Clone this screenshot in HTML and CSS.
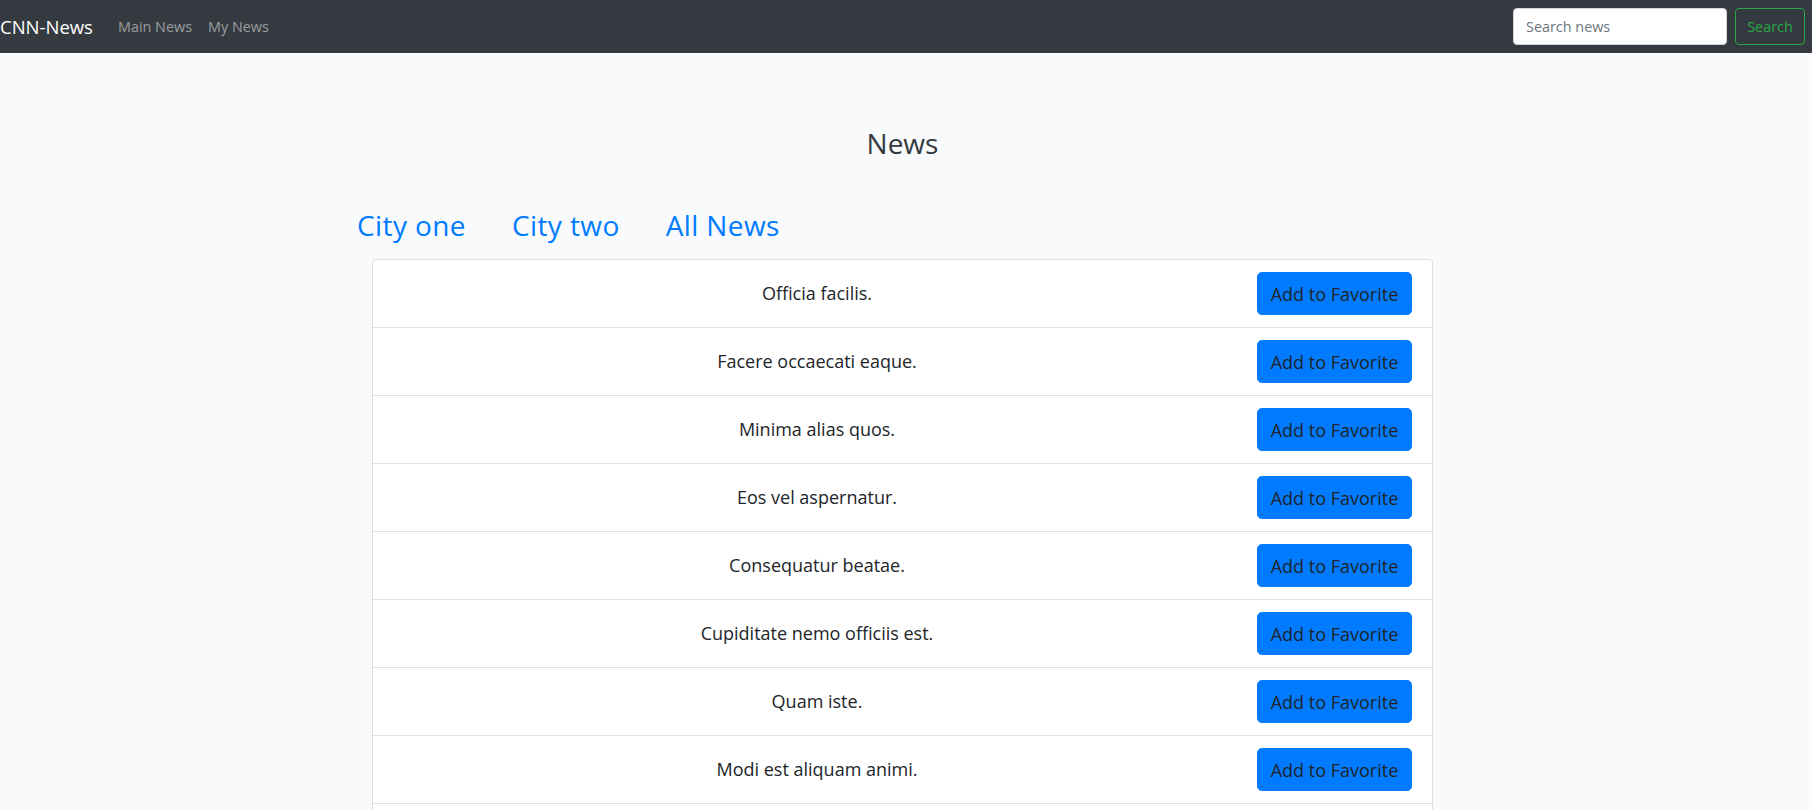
FILE: index.html
```html
<!DOCTYPE html>
<html lang="en">
<head>
<meta charset="utf-8">
<title>CNN-News</title>
<link rel="stylesheet" href="styles.css">
</head>
<body>
<nav class="navbar">
  <a class="brand" href="#">CNN-News</a>
  <ul class="nav-links">
    <li><a href="#">Main News</a></li>
    <li><a href="#">My News</a></li>
  </ul>
  <form class="search-form">
    <input class="search-input" type="search" placeholder="Search news">
    <button class="search-btn" type="button">Search</button>
  </form>
</nav>
<main class="page">
  <h1 class="title">News</h1>
  <div class="tabs">
    <a class="tab" href="#">City one</a>
    <a class="tab" href="#">City two</a>
    <a class="tab" href="#">All News</a>
  </div>
  <ul class="news-list">
    <li class="news-item"><span class="news-title">Officia facilis.</span><button class="fav-btn" type="button">Add to Favorite</button></li>
    <li class="news-item"><span class="news-title">Facere occaecati eaque.</span><button class="fav-btn" type="button">Add to Favorite</button></li>
    <li class="news-item"><span class="news-title">Minima alias quos.</span><button class="fav-btn" type="button">Add to Favorite</button></li>
    <li class="news-item"><span class="news-title">Eos vel aspernatur.</span><button class="fav-btn" type="button">Add to Favorite</button></li>
    <li class="news-item"><span class="news-title">Consequatur beatae.</span><button class="fav-btn" type="button">Add to Favorite</button></li>
    <li class="news-item"><span class="news-title">Cupiditate nemo officiis est.</span><button class="fav-btn" type="button">Add to Favorite</button></li>
    <li class="news-item"><span class="news-title">Quam iste.</span><button class="fav-btn" type="button">Add to Favorite</button></li>
    <li class="news-item"><span class="news-title">Modi est aliquam animi.</span><button class="fav-btn" type="button">Add to Favorite</button></li>
    <li class="news-item"><span class="news-title">Voluptas sint nihil.</span><button class="fav-btn" type="button">Add to Favorite</button></li>
    <li class="news-item"><span class="news-title">Et rerum dolorem.</span><button class="fav-btn" type="button">Add to Favorite</button></li>
  </ul>
</main>
</body>
</html>
```
FILE: styles.css
```css
* { box-sizing: border-box; }
html, body { margin: 0; padding: 0; }
body {
  background: #f8fafc;
  color: #212529;
  font-family: "Open Sans", "Noto Sans", sans-serif;
  font-size: 14.4px;
  line-height: 1.6;
}
a { text-decoration: none; }

.navbar {
  display: flex;
  align-items: center;
  height: 53px;
  padding: 0 7px 0 0;
  background: #343a40;
}
.brand {
  color: #fff;
  font-size: 18.5px;
  line-height: 1.5;
  margin-right: 17px;
}
.nav-links {
  display: flex;
  list-style: none;
  margin: 0;
  padding: 0;
}
.nav-links a {
  display: block;
  padding: 8px 8px;
  color: rgba(255, 255, 255, 0.5);
  font-size: 14.4px;
}
.search-form {
  display: flex;
  align-items: center;
  gap: 8px;
  margin-left: auto;
}
.search-input {
  width: 214px;
  height: 37px;
  padding: 6px 12px;
  border: 1px solid #ced4da;
  border-radius: 4px;
  background: #fff;
  font-family: inherit;
  font-size: 14.4px;
  color: #495057;
  outline: none;
}
.search-input::placeholder { color: #6c757d; }
.search-btn {
  width: 70px;
  height: 37px;
  padding: 6px 0;
  border: 1px solid #28a745;
  border-radius: 4px;
  background: transparent;
  color: #28a745;
  font-family: inherit;
  font-size: 14.4px;
}

.page {
  width: 1101px;
  margin-left: 352px;
  padding-top: 74px;
}
.title {
  margin: 0 0 48px;
  text-align: center;
  font-size: 28px;
  font-weight: 400;
  line-height: 1.2;
  color: #343a40;
}
.tabs {
  display: flex;
  gap: 46px;
  padding-left: 5px;
  margin-bottom: 17px;
}
.tab {
  color: #007bff;
  font-size: 28px;
  line-height: 1.2;
  letter-spacing: 0.4px;
}
.news-list {
  list-style: none;
  margin: 0 20px;
  padding: 0;
  background: #fff;
  border: 1px solid rgba(0, 0, 0, 0.125);
  border-radius: 4px;
}
.news-item {
  display: flex;
  align-items: center;
  gap: 16px;
  padding: 12px 20px;
  border-bottom: 1px solid rgba(0, 0, 0, 0.125);
}
.news-item:last-child { border-bottom: none; }
.news-title {
  flex: 1;
  text-align: center;
  font-size: 18px;
  font-weight: 500;
}
.fav-btn {
  width: 155px;
  height: 43px;
  padding: 0;
  border: 1px solid #007bff;
  border-radius: 4.8px;
  background: #007bff;
  color: #212529;
  font-family: inherit;
  font-size: 18px;
}
```
